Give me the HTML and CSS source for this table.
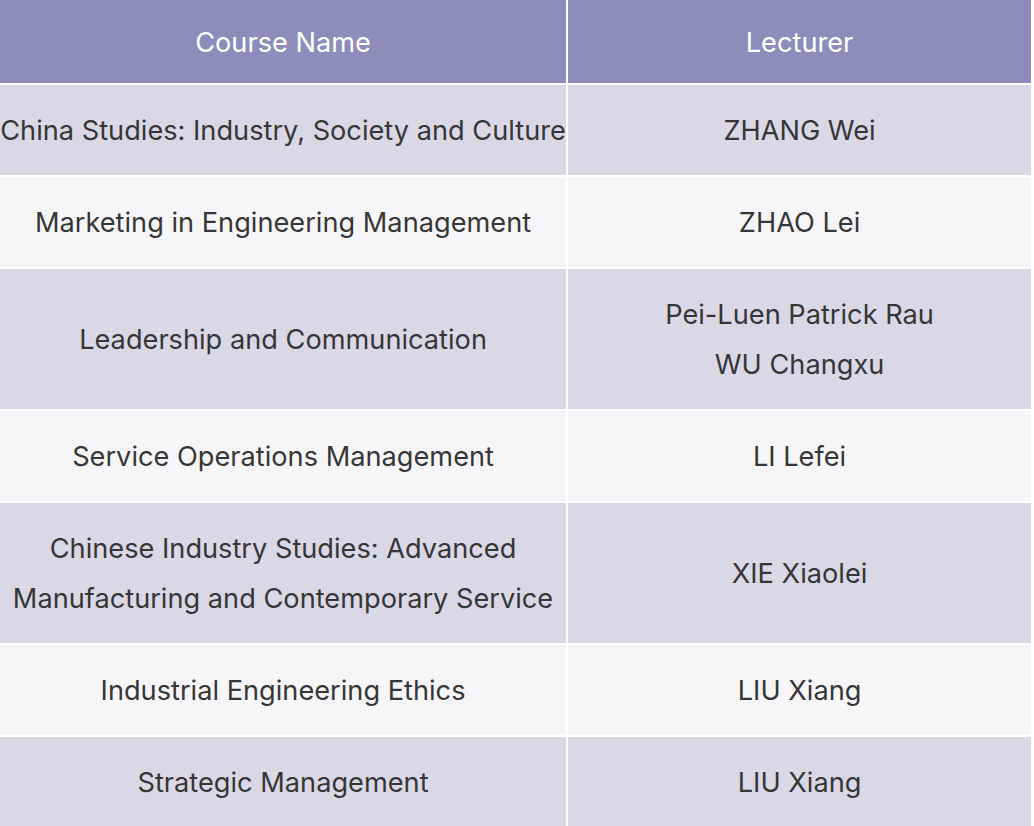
FILE: index.html
```html
<!DOCTYPE html>
<html>
<head>
<meta charset="utf-8">
<link rel="stylesheet" href="styles.css">
</head>
<body>
<table class="courses">
  <thead>
    <tr><th class="col-course">Course Name</th><th class="col-lecturer">Lecturer</th></tr>
  </thead>
  <tbody>
    <tr class="odd"><td>China Studies: Industry, Society and Culture</td><td>ZHANG Wei</td></tr>
    <tr class="even"><td>Marketing in Engineering Management</td><td>ZHAO Lei</td></tr>
    <tr class="odd"><td>Leadership and Communication</td><td>Pei-Luen Patrick Rau<br>WU Changxu</td></tr>
    <tr class="even"><td>Service Operations Management</td><td>LI Lefei</td></tr>
    <tr class="odd"><td>Chinese Industry Studies: Advanced<br>Manufacturing and Contemporary Service</td><td>XIE Xiaolei</td></tr>
    <tr class="even"><td>Industrial Engineering Ethics</td><td>LIU Xiang</td></tr>
    <tr class="odd"><td>Strategic Management</td><td>LIU Xiang</td></tr>
  </tbody>
</table>
</body>
</html>
```
FILE: styles.css
```css
html, body {
  margin: 0;
  padding: 0;
  background: #ffffff;
}
.courses {
  width: 1031px;
  border-collapse: collapse;
  border-spacing: 0;
  table-layout: fixed;
  font-family: "Inter", "Noto Sans", sans-serif;
  font-size: 27.2px;
  color: #363636;
}
.courses th,
.courses td {
  text-align: center;
  vertical-align: middle;
  border-bottom: 2px solid #ffffff;
  padding: 21px 0 19px;
  line-height: 50px;
  white-space: nowrap;
}
.courses th:first-child,
.courses td:first-child {
  border-right: 2px solid #ffffff;
}
.courses th {
  background: #8f8bbb;
  color: #ffffff;
  font-weight: 400;
  height: 84px;
  padding: 2px 0 0;
  box-sizing: border-box;
}
.col-course { width: 566px; }
.col-lecturer { width: 463px; }
.odd td { background: #dad8e7; }
.even td { background: #f6f6f8; }
```
